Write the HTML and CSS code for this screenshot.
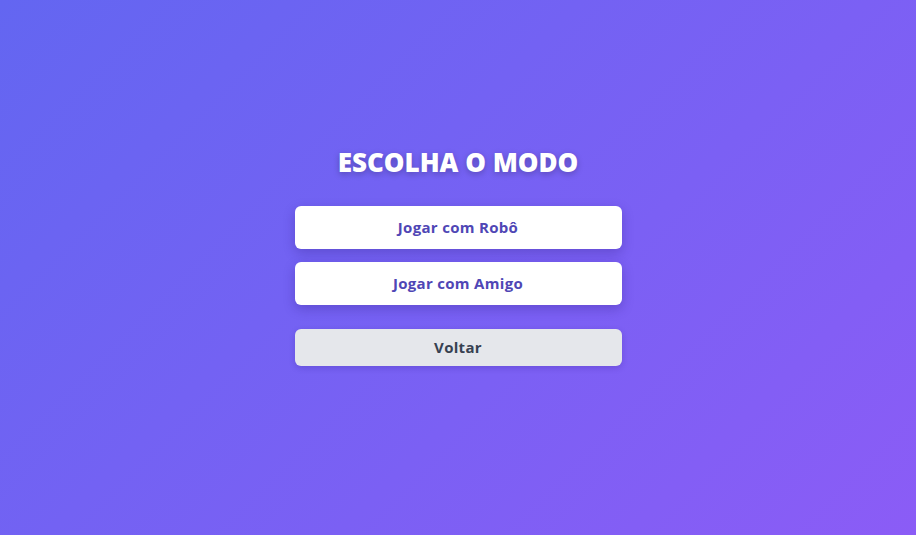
FILE: index.html
```html
<!DOCTYPE html>
<html lang="pt">
<head>
<meta charset="utf-8">
<title>Escolha o modo</title>
<link rel="stylesheet" href="styles.css">
</head>
<body>
<main class="screen">
  <h1 class="title">ESCOLHA O MODO</h1>
  <div class="options">
    <button class="btn btn-primary">Jogar com Robô</button>
    <button class="btn btn-primary">Jogar com Amigo</button>
  </div>
  <button class="btn btn-back">Voltar</button>
</main>
</body>
</html>
```

FILE: styles.css
```css
* { box-sizing: border-box; }
html, body { margin: 0; height: 100%; }
body {
  background: linear-gradient(135deg, #6366f1 0%, #8b5cf6 100%);
  font-family: "Open Sans", "Noto Sans", sans-serif;
}
.screen {
  height: 100vh;
  display: flex;
  flex-direction: column;
  align-items: center;
  justify-content: center;
  padding-bottom: 26px;
}
.title {
  margin: 0 0 26px;
  color: #ffffff;
  font-size: 26px;
  font-weight: 800;
  line-height: 36px;
  letter-spacing: 0;
  text-shadow: 0 2px 6px rgba(0,0,0,0.25);
}
.options {
  display: flex;
  flex-direction: column;
  gap: 13px;
}
.btn {
  width: 327px;
  border: none;
  border-radius: 6px;
  font-family: inherit;
  font-weight: 700;
  font-size: 15px;
  letter-spacing: 0.3px;
  cursor: pointer;
}
.btn-primary {
  height: 43px;
  background: #ffffff;
  color: #4f46b5;
  box-shadow: 0 4px 12px rgba(40, 20, 120, 0.28);
}
.btn-back {
  margin-top: 24px;
  height: 37px;
  background: #e5e7eb;
  color: #374151;
  box-shadow: 0 2px 6px rgba(40, 20, 120, 0.2);
}
```
